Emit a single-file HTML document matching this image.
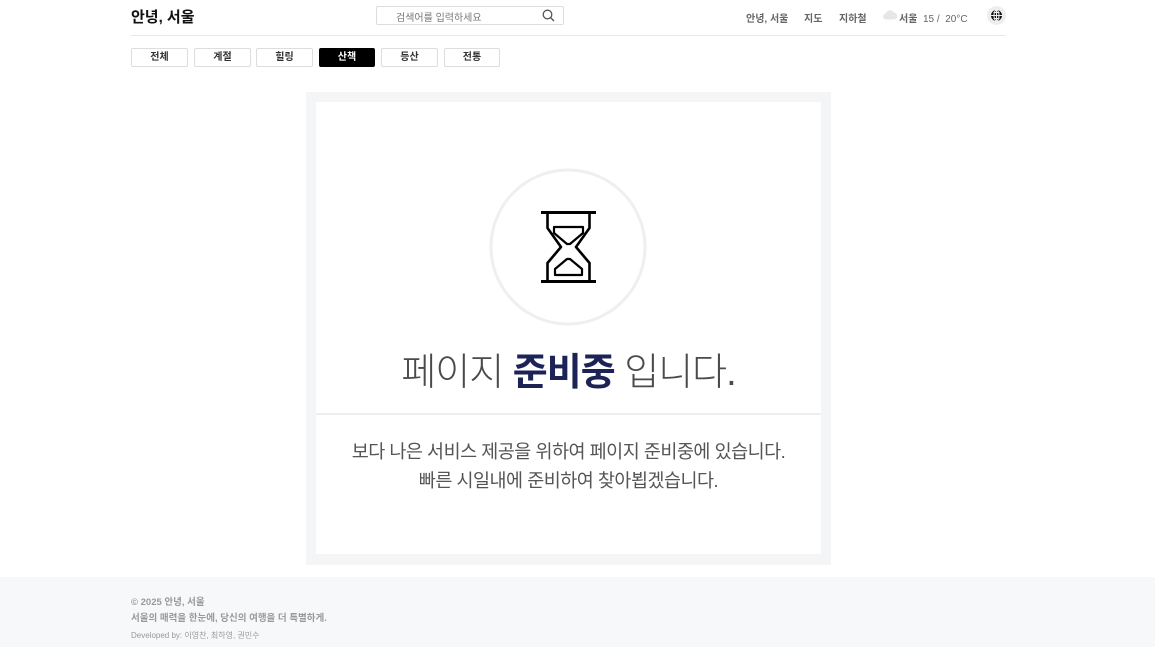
<!DOCTYPE html>
<html><head><meta charset="utf-8">
<style>
*{margin:0;padding:0;box-sizing:border-box}
body{width:1155px;height:647px;background:#fff;font-family:"Liberation Sans","Noto Sans CJK KR",sans-serif;position:relative;overflow:hidden;color:#222}
.abs{position:absolute}
.logo{left:131px;top:6px;font-size:15px;font-weight:bold;color:#111}
.search{left:376px;top:6px;width:188px;height:19px;border:1px solid #ddd;border-radius:2px;font-size:10px;color:#777;padding:2px 0 0 19px}
.hline{left:131px;top:35px;width:875px;height:1px;background:#e8e8e8}
.nav{top:10px;font-size:10px;font-weight:bold;color:#666}
.tab{top:48px;height:19px;width:57px;border:1px solid #ddd;border-radius:2px;font-size:10px;font-weight:bold;text-align:center;line-height:17px;color:#333}
.tab.on{background:#000;color:#fff;border-color:#000}
.card{left:306px;top:92px;width:525px;height:473px;background:#f4f5f7}
.inner{left:316px;top:102px;width:505px;height:452px;background:#fff}
.title{left:316px;width:505px;top:348px;text-align:center;font-size:38px;font-weight:300;color:#4a4a4a;letter-spacing:-1px;line-height:50px}
.title b{color:#1b2357;font-weight:bold}
.div{left:316px;top:413px;width:505px;height:2px;background:#eee}
.sub{left:316px;width:505px;top:437px;text-align:center;font-size:18.5px;color:#555;line-height:29px;letter-spacing:-0.5px}
.foot{left:0;top:577px;width:1155px;height:70px;background:#f7f8fa}
</style></head><body>
<div class="abs logo">안녕, 서울</div>
<div class="abs search">검색어를 입력하세요
<svg class="abs" style="left:165px;top:2px" width="13" height="13" viewBox="0 0 13 13"><circle cx="5.5" cy="5.5" r="4.3" fill="none" stroke="#555" stroke-width="1.3"/><path d="M8.6 8.6L12 12" stroke="#555" stroke-width="1.4"/></svg></div>
<div class="abs nav" style="left:746px">안녕, 서울</div>
<div class="abs nav" style="left:804px">지도</div>
<div class="abs nav" style="left:839px">지하철</div>
<svg class="abs" style="left:883px;top:10px" width="14" height="10" viewBox="0 0 14 10"><path d="M3 9.5a3 3 0 0 1 0-6a4 4 0 0 1 7.5-1a3.5 3.5 0 0 1 0.5 7z" fill="#e6e6e6"/></svg>
<div class="abs" style="left:899px;top:10px;font-size:10px;color:#666"><b>서울</b>&nbsp; 15 / &nbsp;20°C</div>
<div class="abs" style="left:987px;top:6px;width:19px;height:19px;border-radius:50%;background:#eee"></div>
<svg class="abs" style="left:990px;top:9px" width="13" height="13" viewBox="0 0 13 13"><circle cx="6.5" cy="6.5" r="5.5" fill="#111"/><path d="M1 6.5h11M6.5 1v11M3.5 3.5h6M3.5 9.5h6" stroke="#eee" stroke-width="1"/><ellipse cx="6.5" cy="6.5" rx="2.5" ry="5.5" fill="none" stroke="#eee" stroke-width="1"/></svg>
<div class="abs hline"></div>
<div class="abs tab" style="left:131px">전체</div>
<div class="abs tab" style="left:194px">계절</div>
<div class="abs tab" style="left:256px">힐링</div>
<div class="abs tab on" style="left:319px;width:56px">산책</div>
<div class="abs tab" style="left:381px">등산</div>
<div class="abs tab" style="left:444px;width:56px">전통</div>
<div class="abs card"></div>
<div class="abs inner"></div>
<svg class="abs" style="left:0;top:0" width="1155" height="647">
<circle cx="568" cy="247" r="77" fill="none" stroke="#efefef" stroke-width="3"/>
<rect x="541" y="211" width="55" height="3" fill="#000"/>
<rect x="541" y="280" width="55" height="3" fill="#000"/>
<path d="M547.5 214V228L561 247L547.5 263V280M589.5 214V228L576 247L589.5 263V280" fill="none" stroke="#000" stroke-width="2.6" stroke-linejoin="round"/>
<path d="M554 227H583V233L570 244H567L554 233Z" fill="none" stroke="#000" stroke-width="2.2" stroke-linejoin="round"/>
<path d="M555 275V269L567 259H570L582 269V275Z" fill="none" stroke="#000" stroke-width="2.2" stroke-linejoin="round"/>
</svg>
<div class="abs title">페이지 <b>준비중</b> 입니다.</div>
<div class="abs div"></div>
<div class="abs sub">보다 나은 서비스 제공을 위하여 페이지 준비중에 있습니다.<br>빠른 시일내에 준비하여 찾아뵙겠습니다.</div>
<div class="abs foot">
<div class="abs" style="left:131px;top:17px;font-size:9.5px;font-weight:bold;color:#999">© 2025 안녕, 서울</div>
<div class="abs" style="left:131px;top:33px;font-size:9.5px;font-weight:bold;color:#999">서울의 매력을 한눈에, 당신의 여행을 더 특별하게.</div>
<div class="abs" style="left:131px;top:53px;font-size:8px;color:#999">Developed by: 이영찬, 최하영, 권민수</div>
</div>
</body></html>
